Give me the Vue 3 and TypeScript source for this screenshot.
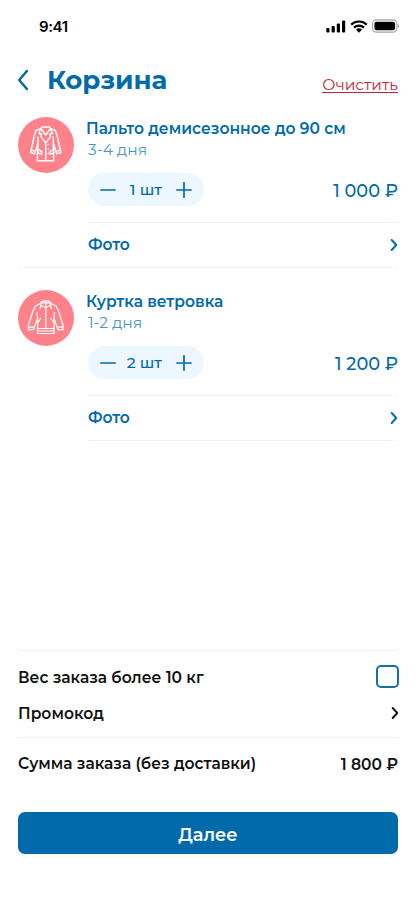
<script setup lang="ts">
import { ref } from 'vue'

interface CartItem {
  id: string
  title: string
  term: string
  qty: number
  price: string
}

const items = ref<CartItem[]>([
  { id: 'coat', title: 'Пальто демисезонное до 90 см', term: '3-4 дня', qty: 1, price: '1 000 ₽' },
  { id: 'jacket', title: 'Куртка ветровка', term: '1-2 дня', qty: 2, price: '1 200 ₽' },
])
const heavy = ref(false)

function change(item: CartItem, delta: number): void {
  item.qty = Math.max(1, item.qty + delta)
}
</script>

<template>
  <div class="screen">
    <div class="status">
      <span class="time">9:41</span>
      <div class="indicators">
        <svg class="signal" width="20" height="13" viewBox="0 0 20 13">
          <rect x="0.3" y="8" width="3.2" height="4.5" rx="1" />
          <rect x="5.6" y="6" width="3.2" height="6.5" rx="1" />
          <rect x="10.8" y="3.4" width="3.2" height="9.1" rx="1" />
          <rect x="16" y="0.5" width="3.2" height="12" rx="1" />
        </svg>
        <svg class="wifi" width="18" height="13" viewBox="0 0 18 13">
          <path d="M1.2 4.6a11.4 11.4 0 0 1 15.6 0M4 7.6a7.2 7.2 0 0 1 10 0" fill="none" stroke="#000" stroke-width="2.2" />
          <path d="M6 9.8a4.3 4.3 0 0 1 6 0L9 12.7z" />
        </svg>
        <svg class="battery" width="28" height="14" viewBox="0 0 28 14">
          <rect x="0.6" y="0.9" width="24.3" height="12.2" rx="3.8" fill="none" stroke="#a3a3a3" stroke-width="1.1" />
          <rect x="2.4" y="2.7" width="20.7" height="8.6" rx="2.2" />
          <path d="M26 5v4.2c1.5-.6 1.5-3.600 0-4.200z" fill="#999" />
        </svg>
      </div>
    </div>

    <header class="header">
      <svg class="back" width="12" height="22" viewBox="0 0 12 22">
        <path d="M9.900 2 2.200 11l7.700 9" />
      </svg>
      <h1>Корзина</h1>
      <a class="clear">Очистить</a>
    </header>

    <main class="items">
      <section v-for="item in items" :key="item.id" class="item">
        <div class="avatar">
          <svg v-if="item.id === 'coat'" class="coat" width="56" height="56" viewBox="0 0 56 56">
            <path d="M23 11.500 18 13.500 16.300 18.500 12.700 35.500 16.800 36.800 20 26 19.300 43.700H35.700L35.300 26 38.600 36.800 42.900 35.500 39 18.500 37.300 13.500 32.500 11.500M20 26V20M35.300 26V20M13.200 33 17.600 34.300M42.400 33 38 34.300" />
            <path d="M23 11.500 24.200 10H31.200L32.500 11.500 27.700 18zM23 11.500 20.900 16.500 23.700 17 22.800 19.300 27.700 26 32.700 19.300 31.800 17 34.600 16.500 32.500 11.500M27.700 26V43.500" />
            <path d="M19.800 32.500 23.800 34.500V37L19.500 36M35.700 32.500 31.900 34.500V37L36 36" />
            <path d="M30.200 27.500h.4M30.200 32h.4M30.200 36.500h.4" />
          </svg>
          <svg v-else width="56" height="56" viewBox="0 0 56 56">
            <path d="M23 13.200 17.500 16 15 21 10.500 35 10.400 39.700H15.500L19.600 28.500V38.500M32.200 13.200 38 16 40.500 21 45 35 45.100 39.700H40L36 28.500V38.500M10.500 37.200H16.200M45 37.200H39.300M19.600 28.500 19 22.500M36 28.500 36.500 22.500" />
            <path d="M23 15.500V12C25.800 10.800 29.800 10.800 32.500 12V15.500L27.800 17.500zM23 12.800H32.500M23 15.500 22 18.700M32.500 15.500 33.400 18.700M27.800 12V38.500M19.500 38.500H36.100V43.500H19.500zM20.500 41H35.200" />
            <path d="M20.500 32 22.500 28.500M35.100 32 33 28.500" />
          </svg>
        </div>
        <div class="body">
          <h2>{{ item.title }}</h2>
          <p class="term">{{ item.term }}</p>
          <div class="row">
            <div class="stepper">
              <svg width="16" height="16" viewBox="0 0 16 16" @click="change(item, -1)">
                <path d="M.8 8h14.400" />
              </svg>
              <span class="qty">{{ item.qty }} шт</span>
              <svg width="16" height="16" viewBox="0 0 16 16" @click="change(item, 1)">
                <path d="M.8 8h14.400M8 .8v14.400" />
              </svg>
            </div>
            <span class="price">{{ item.price }}</span>
          </div>
          <div class="photo">
            <span>Фото</span>
            <svg class="chevron" width="8" height="12" viewBox="0 0 8 12">
              <path d="M1.700 1 6.300 6l-4.600 5" />
            </svg>
          </div>
        </div>
      </section>
    </main>

    <footer class="summary">
      <div class="line weight">
        <span>Вес заказа более 10 кг</span>
        <button class="check" :aria-pressed="heavy" @click="heavy = !heavy"></button>
      </div>
      <div class="line promo">
        <span>Промокод</span>
        <svg class="chevron dark" width="8" height="12" viewBox="0 0 8 12">
          <path d="M1.700 1 6.300 6l-4.600 5" />
        </svg>
      </div>
      <div class="line total">
        <span>Сумма заказа (без доставки)</span>
        <span class="sum">1 800 ₽</span>
      </div>
      <button class="next">Далее</button>
    </footer>
  </div>
</template>

<style>
body {
  margin: 0;
  background: #fff;
}
</style>

<style scoped>
.screen {
  box-sizing: border-box;
  width: 416px;
  height: 900px;
  padding: 0 18px 46px;
  display: flex;
  flex-direction: column;
  background: #fff;
  color: #006aab;
  font-family: Montserrat, Inter, "Noto Sans", sans-serif;
  font-weight: 600;
  font-size: 15.5px;
  white-space: nowrap;
}
h1, h2, p {
  margin: 0;
}
.status {
  display: flex;
  justify-content: space-between;
  align-items: center;
  height: 52px;
  padding-left: 21px;
  color: #000;
}
.time {
  font-family: Inter, sans-serif;
  font-size: 15px;
  letter-spacing: -0.4px;
}
.indicators {
  display: flex;
  align-items: center;
  gap: 4px;
  margin-right: -2px;
}
.header {
  display: flex;
  align-items: center;
  height: 56px;
}
.back {
  margin-left: -1px;
}
.back path {
  fill: none;
  stroke: #006aab;
  stroke-width: 2.5;
  stroke-linecap: round;
  stroke-linejoin: round;
}
h1 {
  margin-left: 18px;
  font-size: 26px;
  line-height: 32px;
  font-weight: 700;
}
.clear {
  margin: 9px 0 0 auto;
  color: #c5283d;
  font-weight: 400;
  font-size: 15.5px;
  text-decoration: underline;
  text-decoration-thickness: 1px;
  text-underline-offset: 2px;
}
.items {
  flex: 1;
}
.item {
  display: flex;
  height: 173px;
}
.avatar {
  flex: none;
  width: 56px;
  height: 56px;
  margin-top: 9px;
  border-radius: 50%;
  background: #ff828b;
}
.avatar svg {
  display: block;
}
.avatar path {
  fill: none;
  stroke: #fff;
  stroke-width: 1.2;
  stroke-linejoin: round;
  stroke-linecap: round;
}
.avatar .coat path {
  stroke-width: 1.4;
}
.body {
  flex: 1;
  margin-left: 14px;
  padding-top: 11px;
}
h2 {
  margin-left: -2px;
  font-size: 15.5px;
  line-height: 20px;
  font-weight: 600;
}
.term {
  margin-top: 1px;
  line-height: 20px;
  font-weight: 400;
  color: #4c96c4;
}
.row {
  display: flex;
  justify-content: space-between;
  align-items: center;
  margin-top: 13px;
  height: 33px;
}
.stepper {
  box-sizing: border-box;
  display: flex;
  align-items: center;
  width: 116px;
  height: 33px;
  padding: 0 12px;
  border-radius: 17px;
  background: #edf7ff;
  font-weight: 500;
}
.qty {
  flex: 1;
  padding-right: 14px;
  text-align: right;
}
.stepper svg path {
  stroke: #006aab;
  stroke-width: 1.7;
  stroke-linecap: round;
}
.price {
  padding-top: 2px;
  font-size: 17.7px;
  font-weight: 500;
}
.photo {
  box-sizing: border-box;
  display: flex;
  align-items: center;
  justify-content: space-between;
  position: relative;
  height: 46px;
  margin-top: 16px;
  border-top: 1px solid #edf4fa;
  border-bottom: 1px solid #edf4fa;
}
.photo span {
  padding-bottom: 2px;
}
.item:first-child .photo {
  border-bottom-color: transparent;
}
.item:first-child .photo::after {
  content: "";
  position: absolute;
  left: -70px;
  right: 0;
  bottom: -1px;
  height: 1px;
  background: #f1f3f6;
}
.chevron path {
  fill: none;
  stroke: #006aab;
  stroke-width: 1.9;
  stroke-linecap: round;
  stroke-linejoin: round;
}
.chevron.dark {
  margin-right: -1px;
}
.chevron.dark path {
  stroke: #111;
}
.summary {
  display: flex;
  flex-direction: column;
  border-top: 1px solid #eaf4fb;
  color: #111;
}
.line {
  display: flex;
  align-items: center;
  justify-content: space-between;
}
.weight {
  height: 51px;
}
.weight span {
  padding-top: 2px;
}
.promo {
  height: 35px;
  padding-bottom: 13px;
  box-sizing: border-box;
}
.total {
  height: 52px;
  border-top: 1px solid #eaf4fb;
}
.total span:first-child {
  padding-bottom: 1px;
}
.sum {
  padding-top: 1px;
}
.check {
  box-sizing: border-box;
  width: 23px;
  height: 23px;
  margin: 0 -1px 1px 0;
  padding: 0;
  border: 2px solid #1270aa;
  border-radius: 5px;
  background: #fff;
}
.next {
  height: 42px;
  margin-top: 22px;
  padding: 2px 0 0;
  border: 0;
  border-radius: 7px;
  background: #006aab;
  color: #fff;
  font: inherit;
  font-size: 17.8px;
}
</style>
